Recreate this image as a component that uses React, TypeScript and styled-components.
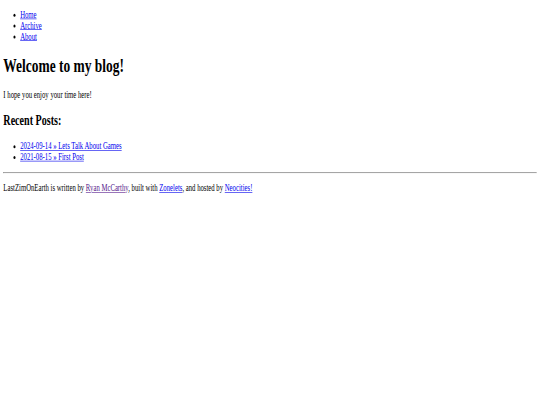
import styled, { createGlobalStyle } from "styled-components";

const GlobalStyle = createGlobalStyle`
  html, body {
    margin: 0;
    padding: 0;
    background: #ffffff;
    overflow: hidden;
  }
`;

// the reference is a plain default-styled page, shrunk unevenly into 540x405
const Viewport = styled.div`
  width: 1286px;
  transform: scale(0.42, 0.6);
  transform-origin: 0 0;
  font-family: "Liberation Serif", "Times New Roman", serif;
  font-size: 16px;
  color: #000000;
`;

const Page = styled.div`
  display: flow-root;
  padding: 0 8px;
`;

const List = styled.ul`
  margin: 16px 0;
  padding-left: 40px;
  list-style: disc;
`;

const Item = styled.li`
  line-height: normal;
`;

const Link = styled.a<{ $visited?: boolean }>`
  color: ${p => (p.$visited ? "#551a8b" : "#0000ee")};
  text-decoration: underline;
  cursor: pointer;
`;

const Title = styled.h1`
  font-size: 32px;
  font-weight: bold;
  margin: 21.44px 0;
`;

const Subtitle = styled.h2`
  font-size: 24px;
  font-weight: bold;
  margin: 19.92px 0;
`;

const Text = styled.p`
  margin: 16px 0;
`;

const Rule = styled.hr`
  margin: 8px 0;
  border: 1px inset #eeeeee;
  border-color: #a0a0a0 #eeeeee #eeeeee #a0a0a0;
  height: 0;
`;

const navLinks = ["Home", "Archive", "About"];

const posts = [
  "2024-09-14 » Lets Talk About Games",
  "2021-08-15 » First Post",
];

export default function App() {
  return (
    <>
      <GlobalStyle />
      <Viewport>
        <Page>
          <nav>
            <List>
              {navLinks.map(link => (
                <Item key={link}>
                  <Link href="#">{link}</Link>
                </Item>
              ))}
            </List>
          </nav>
          <Title>Welcome to my blog!</Title>
          <Text>I hope you enjoy your time here!</Text>
          <Subtitle>Recent Posts:</Subtitle>
          <List>
            {posts.map(post => (
              <Item key={post}>
                <Link href="#">{post}</Link>
              </Item>
            ))}
          </List>
          <Rule />
          <footer>
            <Text>
              LastZimOnEarth is written by <Link $visited href="#">Ryan McCarthy</Link>, built
              with <Link href="#">Zonelets</Link>, and hosted by <Link href="#">Neocities!</Link>
            </Text>
          </footer>
        </Page>
      </Viewport>
    </>
  );
}
